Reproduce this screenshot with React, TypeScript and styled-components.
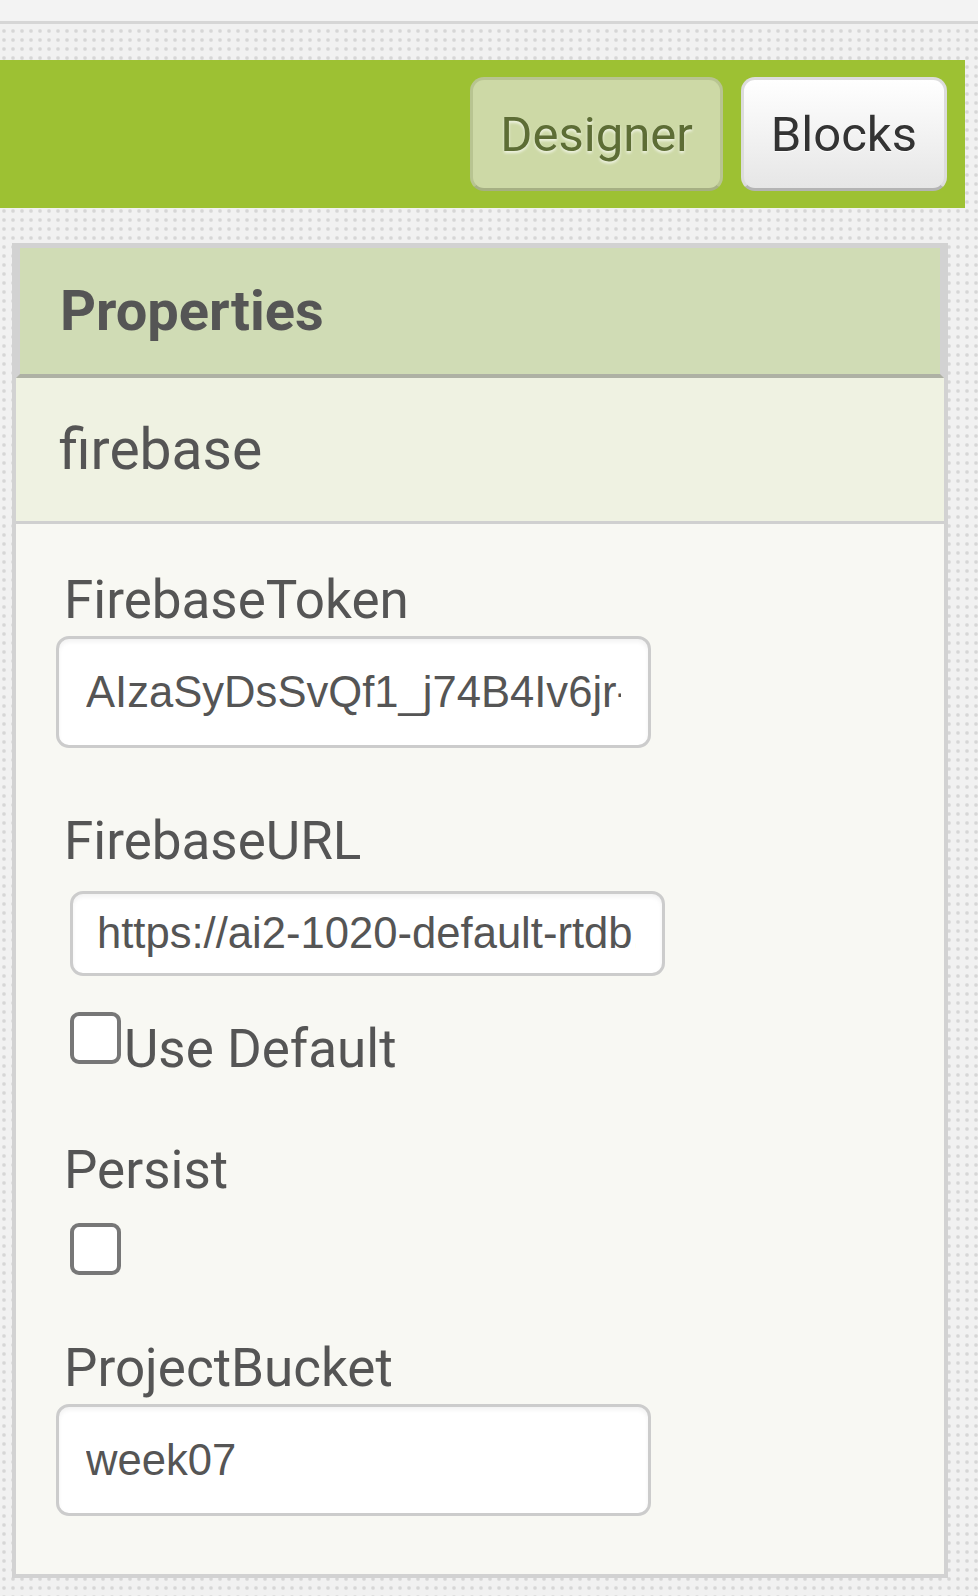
import React from "react";
import styled, { createGlobalStyle } from "styled-components";

const GlobalStyle = createGlobalStyle`
	html, body
	{
		margin: 0;
		padding: 0;
	}

	body
	{
		background-color: #f1f1f1;
		background-image:
			radial-gradient(circle at 4px 4px, #d6d6d6 0, #d6d6d6 1.2px, transparent 2.4px);
		background-size: 9px 9px;
		font-family: Roboto, "Noto Sans", sans-serif;
		color: #555555;
	}
`;

const Page = styled.div
`
	width: 978px;
	min-height: 1596px;
	overflow: hidden;
`;

const BrowserStrip = styled.div
`
	height: 21px;
	background-color: #f3f3f3;
	border-bottom: 3px solid #d6d6d6;
`;

const Toolbar = styled.div
`
	width: 965px;
	height: 148px;
	margin-top: 36px;
	box-sizing: border-box;
	padding-right: 18px;

	display: flex;
	align-items: center;
	justify-content: flex-end;
	gap: 18px;

	background-color: #9dc133;
`;

const ModeButton = styled.div<{$active?: boolean}>
`
	height: 114px;
	box-sizing: border-box;
	padding: 0 27px;

	display: flex;
	align-items: center;

	border: 3px solid ${props => props.$active ? "#b8c491" : "#dcdcdc"};
	border-bottom-color: ${props => props.$active ? "#a6b083" : "#b4b4b4"};
	border-radius: 14px;

	background: ${props => props.$active ? "#cdd9a6" : "linear-gradient(#ffffff, #e6e6e6)"};
	color: ${props => props.$active ? "#5d6d35" : "#333333"};
	text-shadow: ${props => props.$active ? "0 2px 3px rgba(255, 255, 255, 0.7)" : "0 1px 1px rgba(255, 255, 255, 0.9)"};

	font-size: 49px;
	line-height: 1;
`;

const Panel = styled.div
`
	width: 936px;
	margin: 35px 0 16px 12px;
	box-sizing: border-box;

	border: 4px solid #d2d2d2;
	background-color: #f8f8f3;
`;

const PanelHeader = styled.div
`
	height: 126px;
	padding-left: 40px;

	display: flex;
	align-items: center;

	border-style: solid;
	border-color: #d2d2d2;
	border-width: 1px 4px 0 4px;
	border-bottom: 4px solid #aeb1a4;

	background-color: #d0dcb5;
	font-size: 56px;
	font-weight: 700;
`;

const ComponentName = styled.div
`
	height: 143px;
	padding-left: 43px;

	display: flex;
	align-items: center;

	border-bottom: 3px solid #d0d0d0;
	background-color: #eff2e2;
	font-size: 57px;
`;

const PropertyList = styled.div
`
	padding: 44px 0 58px 0;
`;

const Property = styled.div<{$gap: number}>
`
	margin-top: ${props => props.$gap}px;
`;

const PropLabel = styled.div
`
	padding-left: 48px;
	font-size: 53px;
	line-height: 64px;
`;

const TextField = styled.input<{$narrow?: boolean}>
`
	display: block;
	width: 595px;
	height: ${props => props.$narrow ? 85 : 112}px;
	margin: ${props => props.$narrow ? "18px 0 0 54px" : "4px 0 0 40px"};
	box-sizing: border-box;
	padding: ${props => props.$narrow ? "0 26px 0 24px" : "0 27px"};

	border: 3px solid #cccccc;
	border-radius: 13px;
	box-shadow: inset 0 3px 4px rgba(0, 0, 0, 0.05);
	background-color: #ffffff;
	outline: none;

	font-family: "Liberation Sans", Arial, sans-serif;
	font-size: 43.6px;
	color: #555555;
`;

const CheckRow = styled.div<{$gap: number}>
`
	margin-top: ${props => props.$gap}px;
	padding-left: 51px;
	font-size: 53px;
	line-height: 64px;
`;

const CheckBox = styled.span
`
	display: inline-block;
	width: 51px;
	height: 52px;
	margin: 3px;
	box-sizing: border-box;

	border: 4px solid #777777;
	border-radius: 9px;
	background-color: #ffffff;
	vertical-align: baseline;
`;

export default function App ()
{
	return (
		<Page>
			<GlobalStyle/>
			<BrowserStrip/>
			<Toolbar>
				<ModeButton $active>Designer</ModeButton>
				<ModeButton>Blocks</ModeButton>
			</Toolbar>
			<Panel>
				<PanelHeader>Properties</PanelHeader>
				<ComponentName>firebase</ComponentName>
				<PropertyList>
					<Property $gap = {0}>
						<PropLabel>FirebaseToken</PropLabel>
						<TextField readOnly value = "AIzaSyDsSvQf1_j74B4Iv6jr-kQ2wXbN8pLm"/>
					</Property>
					<Property $gap = {61}>
						<PropLabel>FirebaseURL</PropLabel>
						<TextField $narrow readOnly value = "https://ai2-1020-default-rtdb.firebaseio.com/"/>
					</Property>
					<CheckRow $gap = {33}>
						<CheckBox/>Use Default
					</CheckRow>
					<Property $gap = {57}>
						<PropLabel>Persist</PropLabel>
					</Property>
					<CheckRow $gap = {18}>
						<CheckBox/>
					</CheckRow>
					<Property $gap = {44}>
						<PropLabel>ProjectBucket</PropLabel>
						<TextField readOnly value = "week07"/>
					</Property>
				</PropertyList>
			</Panel>
		</Page>
	);
}
